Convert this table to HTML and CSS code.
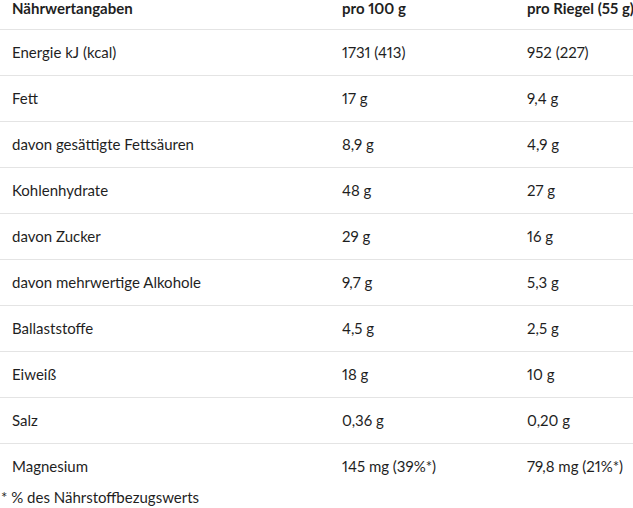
FILE: index.html
```html
<!DOCTYPE html>
<html lang="de">
<head>
<meta charset="utf-8">
<link rel="stylesheet" href="styles.css">
</head>
<body>
<div class="page">
  <table class="nutri">
    <thead>
      <tr><th class="c1">Nährwertangaben</th><th class="c2">pro 100 g</th><th class="c3">pro Riegel (55 g)</th></tr>
    </thead>
    <tbody>
      <tr><td>Energie kJ (kcal)</td><td>1731 (413)</td><td>952 (227)</td></tr>
      <tr><td>Fett</td><td>17 g</td><td>9,4 g</td></tr>
      <tr><td>davon gesättigte Fettsäuren</td><td>8,9 g</td><td>4,9 g</td></tr>
      <tr><td>Kohlenhydrate</td><td>48 g</td><td>27 g</td></tr>
      <tr><td>davon Zucker</td><td>29 g</td><td>16 g</td></tr>
      <tr><td>davon mehrwertige Alkohole</td><td>9,7 g</td><td>5,3 g</td></tr>
      <tr><td>Ballaststoffe</td><td>4,5 g</td><td>2,5 g</td></tr>
      <tr><td>Eiweiß</td><td>18 g</td><td>10 g</td></tr>
      <tr><td>Salz</td><td>0,36 g</td><td>0,20 g</td></tr>
      <tr class="last"><td>Magnesium</td><td>145 mg (39%*)</td><td>79,8 mg (21%*)</td></tr>
    </tbody>
  </table>
  <p class="note">* % des Nährstoffbezugswerts</p>
</div>
</body>
</html>
```
FILE: styles.css
```css
html, body {
  margin: 0;
  padding: 0;
  background: #ffffff;
  overflow: hidden;
}
.page {
  font-family: "Lato", "Noto Sans", sans-serif;
  font-variant-numeric: proportional-nums;
  color: #1f1f1f;
  font-size: 15px;
}
.nutri {
  border-collapse: collapse;
  width: 633px;
  table-layout: fixed;
}
.nutri th, .nutri td {
  padding: 0 0 0 12px;
  text-align: left;
  box-sizing: border-box;
  white-space: nowrap;
  border-bottom: 1px solid #e4e4e4;
}
.nutri td {
  height: 46px;
  vertical-align: middle;
}
.nutri th {
  height: 29px;
  vertical-align: top;
  font-size: 15px;
  line-height: 17px;
  font-weight: 700;
}
.nutri .c1 { width: 330px; }
.nutri .c2 { width: 185px; }
.nutri .last td { border-bottom: none; }
.note {
  margin: -1px 0 0 1px;
  line-height: 18px;
}
```
